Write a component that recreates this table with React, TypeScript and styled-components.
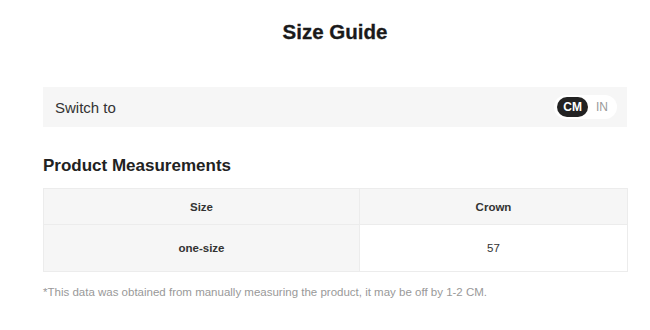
import React, { useState } from 'react'
import styled, { createGlobalStyle } from 'styled-components'

type Unit = 'CM' | 'IN'

const rows = [{ size: 'one-size', crown: 57 }]

export default function App(): JSX.Element {
    const [unit, setUnit] = useState<Unit>('CM')

    const format = (cm: number) => (unit === 'CM' ? String(cm) : (cm / 2.54).toFixed(1))

    return (
        <>
            <GlobalStyle />
            <StyledSizeGuide>
                <Title>Size Guide</Title>
                <SwitchBar>
                    <span>Switch to</span>
                    <Toggle>
                        {(['CM', 'IN'] as Unit[]).map(u => (
                            <ToggleOption key={u} $active={unit === u} onClick={() => setUnit(u)}>
                                {u}
                            </ToggleOption>
                        ))}
                    </Toggle>
                </SwitchBar>
                <SectionTitle>Product Measurements</SectionTitle>
                <Table>
                    <colgroup>
                        <Column $width="316px" />
                        <Column $width="auto" />
                    </colgroup>
                    <thead>
                        <tr>
                            <HeadCell>Size</HeadCell>
                            <HeadCell>Crown</HeadCell>
                        </tr>
                    </thead>
                    <tbody>
                        {rows.map(row => (
                            <tr key={row.size}>
                                <Cell $shaded>{row.size}</Cell>
                                <Cell>{format(row.crown)}</Cell>
                            </tr>
                        ))}
                    </tbody>
                </Table>
                <Note>*This data was obtained from manually measuring the product, it may be off by 1-2 CM.</Note>
            </StyledSizeGuide>
        </>
    )
}

const GlobalStyle = createGlobalStyle`
    body {
        margin: 0;
        background: #fff;
        font-family: 'Liberation Sans', Arial, sans-serif;
        color: #222;
    }
`

const StyledSizeGuide = styled.div`
    width: 650px;
    padding: 20px 23px 0 43px;
    box-sizing: border-box;
    display: flex;
    flex-direction: column;
`

const Title = styled.h1`
    margin: 0;
    text-align: center;
    font-size: 20.5px;
    line-height: 24px;
    font-weight: 700;
    color: #1a1a1a;
    -webkit-text-stroke: 0.3px #1a1a1a;
`

const SwitchBar = styled.div`
    margin-top: 43px;
    height: 40px;
    padding: 0 10px 0 12px;
    background: #f6f6f6;
    display: flex;
    align-items: center;
    justify-content: space-between;
    font-size: 15px;
    color: #333;
`

const Toggle = styled.div`
    display: flex;
    align-items: center;
    background: #fff;
    border-radius: 12px;
    padding: 2px 3px;
    gap: 2px;
`

const ToggleOption = styled.button<{ $active: boolean }>`
    border: none;
    cursor: pointer;
    font-family: inherit;
    font-size: 12px;
    font-weight: ${p => (p.$active ? 700 : 400)};
    height: 20px;
    padding: 0 6px;
    border-radius: 10px;
    background: ${p => (p.$active ? '#222' : 'transparent')};
    color: ${p => (p.$active ? '#fff' : '#999')};
`

const SectionTitle = styled.h2`
    margin: 29px 0 12px;
    font-size: 17px;
    line-height: 20px;
    font-weight: 700;
    color: #222;
`

const Table = styled.table`
    width: 585px;
    table-layout: fixed;
    border-collapse: collapse;
    border: 1px solid #ececec;
    font-size: 11.5px;
    color: #333;
`

const Column = styled.col<{ $width: string }>`
    width: ${p => p.$width};
`

const HeadCell = styled.th`
    height: 35px;
    padding: 0;
    background: #f6f6f6;
    border: 1px solid #ececec;
    font-weight: 700;
    text-align: center;
`

const Cell = styled.td<{ $shaded?: boolean }>`
    height: 46px;
    padding: 0;
    text-align: center;
    font-weight: ${p => (p.$shaded ? 700 : 400)};
    background: ${p => (p.$shaded ? '#f6f6f6' : '#fff')};
    border: 1px solid #ececec;
`

const Note = styled.p`
    margin: 14px 0 0;
    font-size: 11.5px;
    color: #999;
`
